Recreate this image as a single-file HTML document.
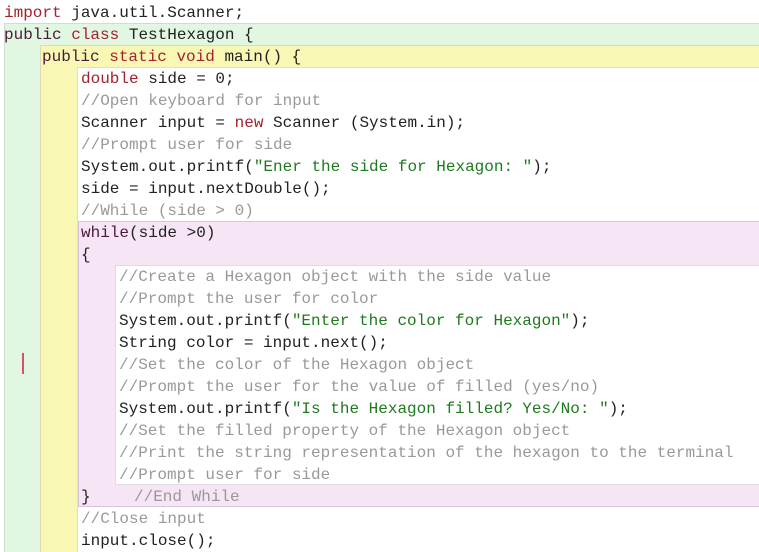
<!DOCTYPE html>
<html style="overflow:hidden;height:552px"><head><meta charset="utf-8"><style>
body{margin:0;width:759px;height:552px;overflow:hidden;background:#fff;position:relative;font-family:"Liberation Mono","DejaVu Sans Mono",monospace;font-size:16px;}
.b{position:absolute;box-sizing:border-box;}
.l{position:absolute;white-space:pre;line-height:22px;height:22px;color:#222;}
.k{color:#a3222f}.p{color:#4a1a3a}.s{color:#1e7a1e}.c{color:#999}
</style></head><body>
<div class="b" style="left:4px;top:23px;width:760px;height:535px;background:#e2f7e2;border:1px solid #cfdccf"></div>
<div class="b" style="left:40px;top:45px;width:725px;height:515px;background:#f8f8b4;border:1px solid #dcdcb4"></div>
<div class="b" style="left:77px;top:67px;width:690px;height:495px;background:#fff;border:1px solid #ddd"></div>
<div class="b" style="left:78px;top:221px;width:690px;height:286px;background:#f5e5f5;border:1px solid #d8c4d8"></div>
<div class="b" style="left:115px;top:265px;width:650px;height:220px;background:#fff;border:1px solid #ddd"></div>
<div class="b" style="left:22px;top:353px;width:2px;height:21px;background:#d9506a"></div>

<div class="l" style="left:4px;top:2px"><span class="k">import</span> java.util.Scanner;</div>
<div class="l" style="left:4px;top:24px"><span class="p">public</span> <span class="k">class</span> TestHexagon {</div>
<div class="l" style="left:42px;top:46px"><span class="p">public</span> <span class="k">static</span> <span class="k">void</span> main() {</div>
<div class="l" style="left:81px;top:68px"><span class="k">double</span> side = 0;</div>
<div class="l c" style="left:81px;top:90px">//Open keyboard for input</div>
<div class="l" style="left:81px;top:112px">Scanner input = <span class="k">new</span> Scanner (System.in);</div>
<div class="l c" style="left:81px;top:134px">//Prompt user for side</div>
<div class="l" style="left:81px;top:156px">System.out.printf(<span class="s">"Ener the side for Hexagon: "</span>);</div>
<div class="l" style="left:81px;top:178px">side = input.nextDouble();</div>
<div class="l c" style="left:81px;top:200px">//While (side &gt; 0)</div>
<div class="l" style="left:81px;top:222px"><span class="p">while</span>(side &gt;0)</div>
<div class="l" style="left:81px;top:244px">{</div>
<div class="l c" style="left:119px;top:266px">//Create a Hexagon object with the side value</div>
<div class="l c" style="left:119px;top:288px">//Prompt the user for color</div>
<div class="l" style="left:119px;top:310px">System.out.printf(<span class="s">"Enter the color for Hexagon"</span>);</div>
<div class="l" style="left:119px;top:332px">String color = input.next();</div>
<div class="l c" style="left:119px;top:354px">//Set the color of the Hexagon object</div>
<div class="l c" style="left:119px;top:376px">//Prompt the user for the value of filled (yes/no)</div>
<div class="l" style="left:119px;top:398px">System.out.printf(<span class="s">"Is the Hexagon filled? Yes/No: "</span>);</div>
<div class="l c" style="left:119px;top:420px">//Set the filled property of the Hexagon object</div>
<div class="l c" style="left:119px;top:442px">//Print the string representation of the hexagon to the terminal</div>
<div class="l c" style="left:119px;top:464px">//Prompt user for side</div>
<div class="l" style="left:81px;top:486px">}</div>
<div class="l c" style="left:134px;top:486px">//End While</div>
<div class="l c" style="left:81px;top:508px">//Close input</div>
<div class="l" style="left:81px;top:530px">input.close();</div>
</body></html>
